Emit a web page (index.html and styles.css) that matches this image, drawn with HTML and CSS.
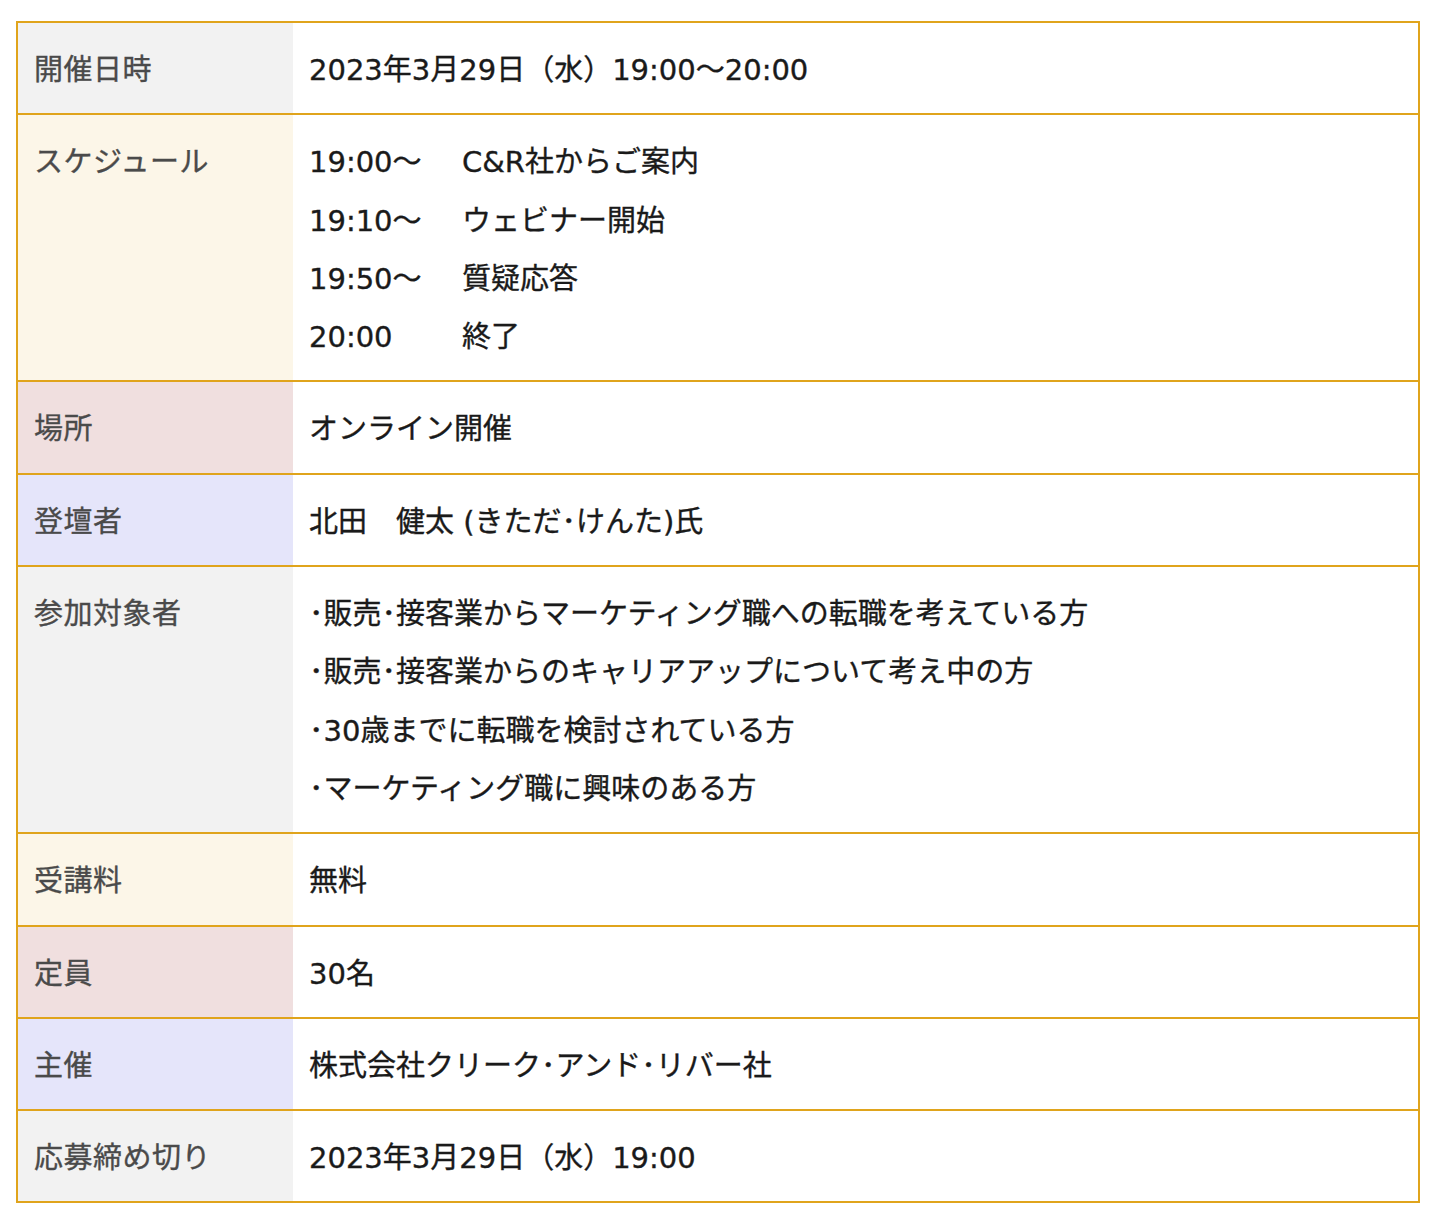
FILE: index.html
```html
<!DOCTYPE html>
<html lang="ja">
<head>
<meta charset="utf-8">
<title>セミナー概要</title>
<link rel="stylesheet" href="styles.css">
</head>
<body>
<div class="page">
  <table class="info">
    <tbody>
      <tr class="row-grey">
        <th>開催日時</th>
        <td>2023年3月29日（水）19:00～20:00</td>
      </tr>
      <tr class="row-cream">
        <th>スケジュール</th>
        <td>
          <div class="schedule">
            <span>19:00～</span><span>C&amp;R社からご案内</span>
            <span>19:10～</span><span>ウェビナー開始</span>
            <span>19:50～</span><span>質疑応答</span>
            <span>20:00</span><span>終了</span>
          </div>
        </td>
      </tr>
      <tr class="row-pink">
        <th>場所</th>
        <td>オンライン開催</td>
      </tr>
      <tr class="row-lav">
        <th>登壇者</th>
        <td>北田　健太 (きただ･けんた)氏</td>
      </tr>
      <tr class="row-grey">
        <th>参加対象者</th>
        <td>
          <ul class="targets">
            <li>･販売･接客業からマーケティング職への転職を考えている方</li>
            <li>･販売･接客業からのキャリアアップについて考え中の方</li>
            <li>･30歳までに転職を検討されている方</li>
            <li>･マーケティング職に興味のある方</li>
          </ul>
        </td>
      </tr>
      <tr class="row-cream">
        <th>受講料</th>
        <td>無料</td>
      </tr>
      <tr class="row-pink">
        <th>定員</th>
        <td>30名</td>
      </tr>
      <tr class="row-lav">
        <th>主催</th>
        <td>株式会社クリーク･アンド･リバー社</td>
      </tr>
      <tr class="row-grey">
        <th>応募締め切り</th>
        <td>2023年3月29日（水）19:00</td>
      </tr>
    </tbody>
  </table>
</div>
</body>
</html>
```

FILE: styles.css
```css
html, body {
  margin: 0;
  padding: 0;
  background: #ffffff;
}

.page {
  padding: 21px 0 0 16px;
}

.info {
  width: 1404px;
  border-collapse: collapse;
  border: 2px solid #e0a41c;
  font-family: "DejaVu Sans", "Noto Sans CJK JP", sans-serif;
  font-size: 29px;
  line-height: 58.3px;
}

.info tr {
  border-bottom: 2px solid #e0a41c;
}

.info th,
.info td {
  padding: 18px 16px 14px;
  text-align: left;
  vertical-align: top;
  font-weight: normal;
  -webkit-text-stroke: 0.35px currentColor;
}

.info th {
  width: 243px;
  color: #4a4a4a;
  letter-spacing: 0.5px;
}

.info td {
  color: #1a1a1a;
  background: #ffffff;
}

.row-grey th { background: #f2f2f2; }
.row-cream th { background: #fcf6e8; }
.row-pink th { background: #f0dfdf; }
.row-lav th { background: #e5e5fa; }

.schedule {
  display: grid;
  grid-template-columns: 153px 1fr;
}

.targets {
  list-style: none;
  margin: 0;
  padding: 0;
}
```
